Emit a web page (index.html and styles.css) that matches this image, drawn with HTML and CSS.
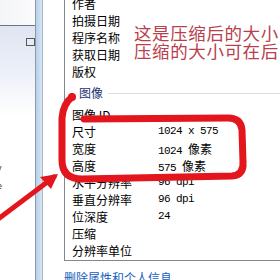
FILE: index.html
```html
<!DOCTYPE html>
<html>
<head>
<meta charset="utf-8">
<link rel="stylesheet" href="styles.css">
</head>
<body>
<div class="screen">
  <aside class="left">
    <div class="left-top"></div>
    <div class="left-body">
      <span class="tab-btn"></span>
      <div class="stray">v</div>
      <div class="stray second">e</div>
    </div>
  </aside>
  <div class="splitter"></div>
  <main class="dialog">
    <div class="listbox">
      <div class="row"><span>作者</span><span></span></div>
      <div class="row"><span>拍摄日期</span><span></span></div>
      <div class="row"><span>程序名称</span><span></span></div>
      <div class="row"><span>获取日期</span><span></span></div>
      <div class="row"><span>版权</span><span></span></div>
      <div class="group"><span class="group-title">图像</span><span class="group-line"></span></div>
      <div class="row"><span>图像 ID</span><span></span></div>
      <div class="row"><span>尺寸</span><span class="val">1024 x 575</span></div>
      <div class="row"><span>宽度</span><span class="val">1024 <span class="cjk">像素</span></span></div>
      <div class="row"><span>高度</span><span class="val">575 <span class="cjk">像素</span></span></div>
      <div class="row"><span>水平分辨率</span><span class="val">96 dpi</span></div>
      <div class="row"><span>垂直分辨率</span><span class="val">96 dpi</span></div>
      <div class="row"><span>位深度</span><span class="val">24</span></div>
      <div class="row"><span>压缩</span><span></span></div>
      <div class="row"><span>分辨率单位</span><span></span></div>
    </div>
    <a class="link">删除属性和个人信息</a>
  </main>
  <svg class="marks" width="280" height="280" viewBox="0 0 280 280">
    <g fill="none" stroke="#e3151d" stroke-width="7" stroke-linecap="round" stroke-linejoin="round">
      <path d="M72 97 Q63 104 62 118 L62 160 Q62 179 82 179 L232 176 Q244 175 243 162 L242 130 Q241 118 228 118 L84 119"/>
      <path d="M-6 222 L54 177" stroke-width="5"/>
    </g>
    <path d="M58 174 L40 177 L51 189 Z" fill="#e3151d"/>
    <circle cx="72" cy="97" r="4" fill="#e3151d"/>
  </svg>
  <div class="note">这是压缩后的大小<br>压缩的大小可在后</div>
</div>
</body>
</html>
```
FILE: styles.css
```css
html, body {
  margin: 0;
  padding: 0;
  background: #fff;
}
.screen {
  position: relative;
  width: 280px;
  height: 280px;
  overflow: hidden;
  display: flex;
  font-family: "Noto Sans CJK SC", "Noto Sans", sans-serif;
  font-size: 12px;
  color: #000;
}
.left {
  width: 35px;
  flex: none;
  display: flex;
  flex-direction: column;
}
.left-top {
  height: 25px;
  background: linear-gradient(to right, #f4f5f8, #fbfbfc);
  border-bottom: 1px solid #6e7480;
}
.left-body {
  flex: 1;
  background: linear-gradient(to bottom, #dfe5f2 0, #eaeef7 40px, #ffffff 90px);
  display: flex;
  flex-direction: column;
  align-items: flex-end;
}
.tab-btn {
  margin-top: 12px;
  width: 7px;
  height: 6px;
  border: 1px solid #505860;
  background: #e8ecf2;
}
.stray {
  align-self: flex-start;
  margin-top: 118px;
  margin-left: -3px;
  font-family: "Liberation Sans", sans-serif;
  font-size: 9px;
  line-height: 9px;
  color: #333;
}
.stray.second {
  margin-top: 9px;
}
.splitter {
  width: 6px;
  flex: none;
  border-left: 1px solid #8c9aab;
  border-right: 1px solid #a9b6c4;
  background: linear-gradient(to right, #b9d0e8, #d6e6f5);
}
.dialog {
  flex: 1;
  min-width: 0;
  padding-left: 21px;
  display: flex;
  flex-direction: column;
}
.listbox {
  width: 260px;
  margin-top: -5px;
  border-left: 1px solid #828790;
  border-bottom: 1px solid #828790;
  padding-bottom: 1px;
}
.row {
  display: grid;
  grid-template-columns: 86px 1fr;
  height: 17px;
  line-height: 17px;
  padding-left: 7px;
  white-space: nowrap;
}
.val {
  font-family: "Liberation Mono", monospace;
  font-size: 11px;
  letter-spacing: -0.6px;
}
.val .cjk {
  font-family: "Noto Sans CJK SC", sans-serif;
  font-size: 12px;
  letter-spacing: 0;
}
.group {
  display: flex;
  align-items: center;
  height: 17px;
  line-height: 17px;
  padding: 4px 0 5px 14px;
}
.group-title {
  color: #1e3470;
}
.group-line {
  flex: 1;
  height: 1px;
  margin-left: 5px;
  margin-top: 1px;
  background: #d8dde6;
}
.link {
  margin-top: 8px;
  padding-left: 0;
  color: #1560bd;
  line-height: 17px;
  white-space: nowrap;
}
.marks {
  position: absolute;
  left: 0;
  top: 0;
  pointer-events: none;
}
.note {
  position: absolute;
  left: 134px;
  top: 24px;
  font-size: 17.5px;
  line-height: 18px;
  color: #b8404c;
  white-space: nowrap;
  letter-spacing: 0.6px;
}
```
